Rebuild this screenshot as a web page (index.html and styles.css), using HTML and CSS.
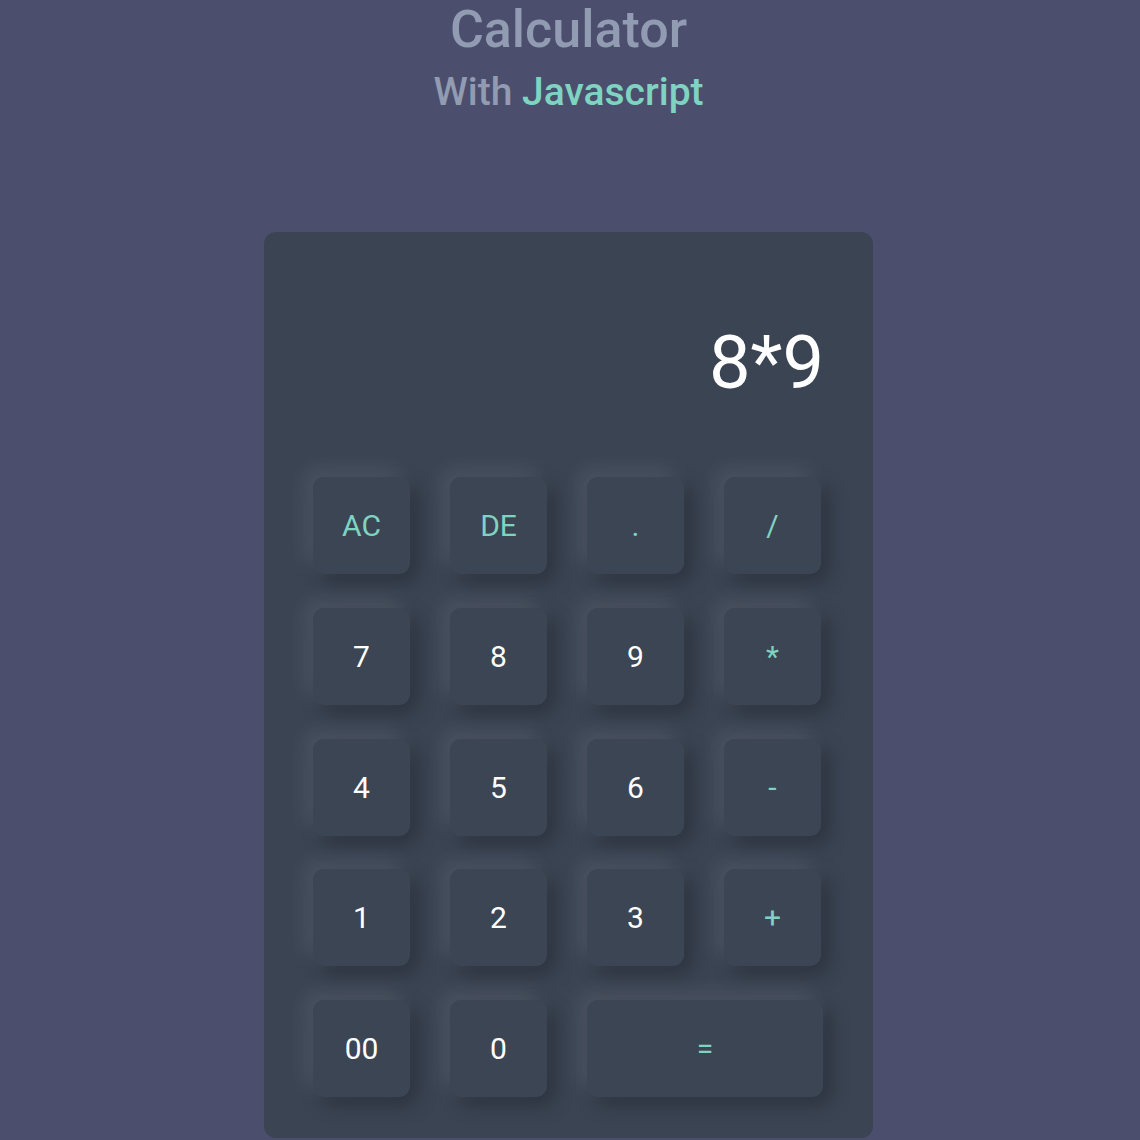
FILE: index.html
```html
<!DOCTYPE html>
<html lang="en">
<head>
<meta charset="utf-8">
<title>Calculator</title>
<link rel="stylesheet" href="styles.css">
</head>
<body>
  <header class="heading">
    <h1 class="title">Calculator</h1>
    <h2 class="subtitle">With <span class="accent">Javascript</span></h2>
  </header>
  <main class="calculator">
    <div class="display">8*9</div>
    <div class="keys">
      <button class="key op">AC</button>
      <button class="key op">DE</button>
      <button class="key op">.</button>
      <button class="key op">/</button>
      <button class="key">7</button>
      <button class="key">8</button>
      <button class="key">9</button>
      <button class="key op">*</button>
      <button class="key">4</button>
      <button class="key">5</button>
      <button class="key">6</button>
      <button class="key op">-</button>
      <button class="key">1</button>
      <button class="key">2</button>
      <button class="key">3</button>
      <button class="key op">+</button>
      <button class="key">00</button>
      <button class="key">0</button>
      <button class="key op wide">=</button>
    </div>
  </main>
</body>
</html>
```
FILE: styles.css
```css
* { box-sizing: border-box; }
html, body { margin: 0; padding: 0; }
body {
  background: #4b4f6d;
  font-family: Roboto, "Liberation Sans", sans-serif;
  min-height: 1140px;
  display: flex;
  flex-direction: column;
  align-items: center;
  padding-top: 2px;
  padding-right: 3px;
}
.heading { text-align: center; }
.title {
  margin: 0;
  font-size: 52px;
  font-weight: 500;
  color: #919bb1;
  line-height: 56px;
}
.subtitle {
  margin: 12px 0 0;
  font-size: 39px;
  font-weight: 500;
  color: #919bb1;
  line-height: 44px;
}
.accent { color: #7fd4c1; }
.calculator {
  margin-top: 118px;
  width: 609px;
  background: #3b4453;
  border-radius: 12px;
  padding: 0 51px 41px 49px;
}
.display {
  font-family: Roboto, "Liberation Sans", sans-serif;
  font-size: 74px;
  line-height: 74px;
  color: #ffffff;
  text-align: right;
  padding-top: 94px;
  margin-right: -2px;
  height: 245px;
}
.keys {
  display: grid;
  grid-template-columns: repeat(4, 97px);
  grid-auto-rows: 97px;
  column-gap: 40px;
  row-gap: 33.75px;
}
.key {
  border: none;
  background: #3c4554;
  border-radius: 11px;
  color: #ffffff;
  font-family: Roboto, "Liberation Sans", sans-serif;
  font-size: 30px;
  padding: 0;
  box-shadow: -8px -8px 20px rgba(255, 255, 255, 0.09), 8px 8px 20px rgba(0, 0, 0, 0.26);
}
.op { color: #7fd4c1; }
.wide { grid-column: span 2; width: 236px; }
```
